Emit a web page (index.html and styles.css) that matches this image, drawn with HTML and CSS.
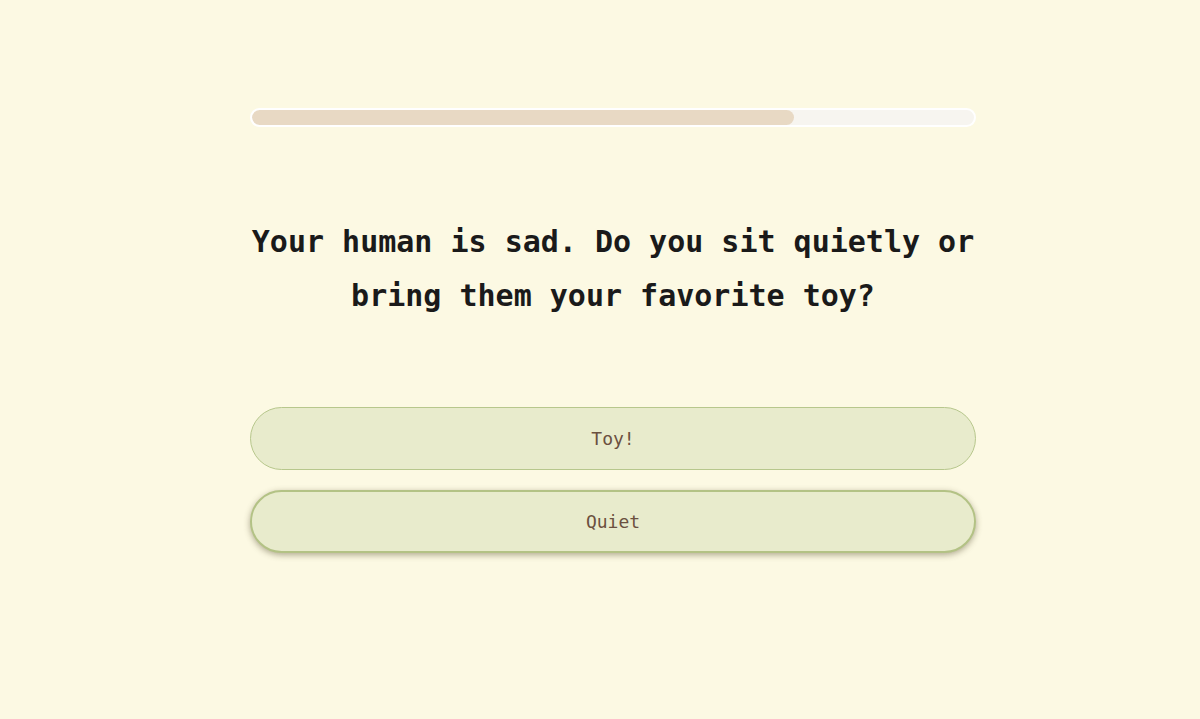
FILE: index.html
```html
<!DOCTYPE html>
<html lang="en">
<head>
<meta charset="utf-8">
<title>Quiz</title>
<link rel="stylesheet" href="styles.css">
</head>
<body>
<main class="quiz">
  <div class="progress"><div class="progress-fill" style="width: 75%"></div></div>
  <h1 class="question">Your human is sad. Do you sit quietly or bring them your favorite toy?</h1>
  <div class="options">
    <button class="option">Toy!</button>
    <button class="option option-active">Quiet</button>
  </div>
</main>
</body>
</html>
```
FILE: styles.css
```css
html, body {
  margin: 0;
  height: 100%;
  background: #fcf9e3;
}
body {
  padding-left: 26px;
  box-sizing: border-box;
  font-family: "DejaVu Sans Mono", "Liberation Mono", monospace;
}
.quiz {
  width: 726px;
  margin: 0 auto;
  padding-top: 108px;
}
.progress {
  height: 15px;
  border: 2px solid #ffffff;
  border-radius: 12px;
  background: #f7f5f0;
  overflow: hidden;
}
.progress-fill {
  height: 100%;
  background: #e8d9c4;
  border-radius: 10px;
}
.question {
  margin: 88px 0 0;
  text-align: center;
  font-size: 30px;
  line-height: 54px;
  font-weight: bold;
  color: #1a1a1a;
}
.options {
  margin-top: 84px;
  display: flex;
  flex-direction: column;
  gap: 20px;
}
.option {
  height: 63px;
  border: 1px solid #b7c78c;
  border-radius: 32px;
  background: #e8ebcc;
  color: #6b5040;
  font-family: inherit;
  font-size: 18px;
  cursor: pointer;
}
.option-active {
  border: 2px solid #b3c285;
  box-shadow: 0 2px 6px rgba(80, 70, 40, 0.45);
}
```
